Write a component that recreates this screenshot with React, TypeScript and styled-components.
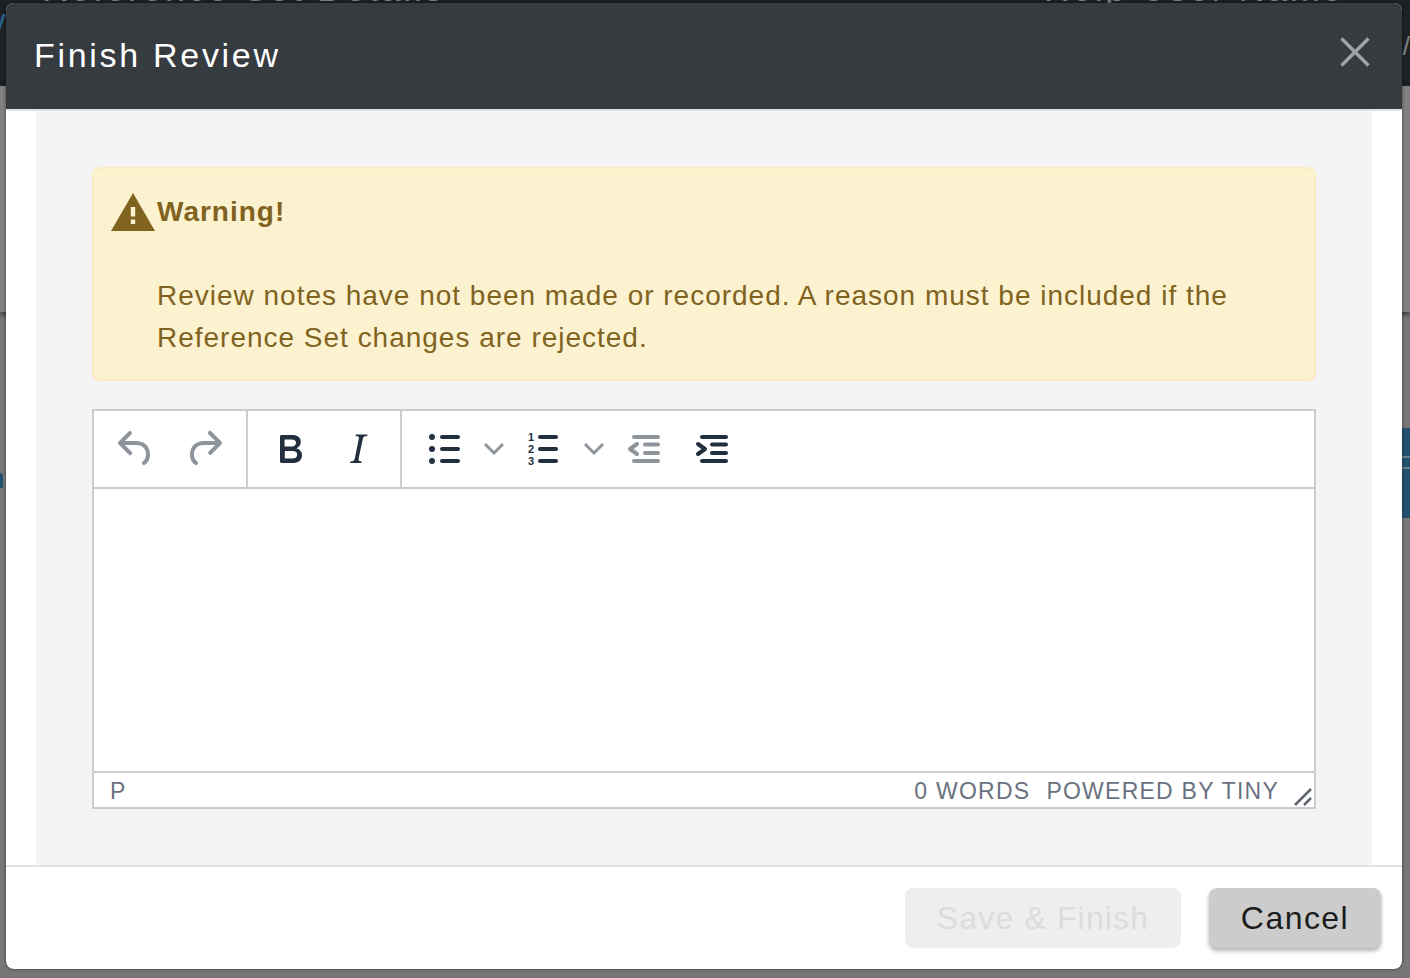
import React from "react";
import styled, { createGlobalStyle } from "styled-components";

const GlobalStyle = createGlobalStyle`
  html, body {
    margin: 0;
    padding: 0;
    height: 100%;
    overflow: hidden;
    background: #777;
    font-family: "Liberation Sans", Arial, sans-serif;
  }
`;

const Page = styled.div`
  position: relative;
  width: 1410px;
  height: 978px;
  overflow: hidden;
`;

/* dimmed page behind the dialog */
const TopBar = styled.div`
  height: 86px;
  background: #1d2125;
  display: flex;
  color: #7d8184;
  font-size: 36px;
  overflow: hidden;
`;

const BrandEnd = styled.span`
  width: 8px;
  color: #265f86;
  margin: 4px 0 0 -12px;
  line-height: 36px;
`;

const GhostText = styled.span<{ $left: string }>`
  margin-top: -29px;
  margin-left: ${(p) => p.$left};
  line-height: 36px;
  letter-spacing: 2.5px;
  white-space: nowrap;
`;

const Slash = styled.span`
  margin: 28px 0 0 58px;
  line-height: 36px;
  font-size: 26px;
`;

const Strip = styled.div`
  height: 226px;
  background: #808080;
  box-shadow: 0 3px 5px rgba(0, 0, 0, 0.5);
  position: relative;
`;

const Lower = styled.div`
  height: 666px;
  background: #777;
  display: flex;
  justify-content: space-between;
`;

const BlueTabLeft = styled.div`
  width: 3px;
  height: 15px;
  margin-top: 161px;
  background: #22506e;
  border-top-right-radius: 3px;
`;

const BlueTabRight = styled.div`
  width: 8px;
  height: 90px;
  margin-top: 116px;
  background: linear-gradient(
    #22506e 0 28px,
    #6d7f8b 28px 30px,
    #22506e 30px 39px,
    #6d7f8b 39px 41px,
    #22506e 41px
  );
`;

/* dialog */
const Modal = styled.div`
  position: absolute;
  left: 6px;
  top: 3px;
  width: 1396px;
  height: 966px;
  background: #fff;
  border-radius: 8px;
  box-shadow: 0 0 3px rgba(0, 0, 0, 0.6);
  display: flex;
  flex-direction: column;
  overflow: hidden;
`;

const Header = styled.header`
  height: 106px;
  flex: none;
  background: #363b3f;
  border-bottom: 2px solid #dee2e6;
  display: flex;
  align-items: flex-start;
  justify-content: space-between;
  padding: 0 32px 0 28px;
`;

const Title = styled.h1`
  margin: 32px 0 0;
  font-size: 34px;
  line-height: 40px;
  font-weight: 400;
  letter-spacing: 2.7px;
  color: #fff;
`;

const CloseButton = styled.button`
  border: 0;
  padding: 0;
  margin-top: 34px;
  width: 30px;
  height: 30px;
  background: none;
  display: flex;
`;

const Body = styled.main`
  flex: 1;
  padding: 0 30px;
  display: flex;
  min-height: 0;
`;

const Panel = styled.section`
  flex: 1;
  background: #f4f4f4;
  padding: 56px 56px 0;
`;

const Alert = styled.div`
  box-sizing: border-box;
  height: 214px;
  background: #fdf2d0;
  border: 2px solid #fcedc0;
  border-radius: 8px;
  color: #80631f;
  padding: 24px 16px 0 17px;
  font-size: 28px;
  letter-spacing: 0.99px;
  line-height: 42px;
`;

const AlertHead = styled.div`
  display: flex;
  align-items: flex-start;
  gap: 2px;
  height: 82px;
`;

const AlertTitle = styled.strong`
  font-weight: 700;
  margin-top: -2px;
`;

const AlertText = styled.p`
  margin: 0 0 0 46px;
  white-space: nowrap;
`;

const Editor = styled.div`
  box-sizing: border-box;
  margin-top: 28px;
  height: 400px;
  background: #fff;
  border: 2px solid #ccc;
  display: flex;
  flex-direction: column;
`;

const Toolbar = styled.div`
  height: 76px;
  flex: none;
  border-bottom: 2px solid #ccc;
  display: flex;
`;

const ToolGroup = styled.div<{ $pad: number; $last?: boolean }>`
  box-sizing: border-box;
  width: 154px;
  flex: ${(p) => (p.$last ? 1 : "none")};
  border-right: ${(p) => (p.$last ? 0 : "2px solid #ccc")};
  padding-left: ${(p) => p.$pad}px;
  display: flex;
  align-items: center;
`;

const ToolButton = styled.button<{ $width: number; $inset?: number }>`
  box-sizing: border-box;
  border: 0;
  padding: 0 0 0 ${(p) => p.$inset ?? 0}px;
  background: none;
  width: ${(p) => p.$width}px;
  height: 68px;
  flex: none;
  display: flex;
  align-items: center;
  justify-content: center;
`;

const ContentArea = styled.div`
  flex: 1;
`;

const StatusBar = styled.footer`
  height: 36px;
  flex: none;
  border-top: 2px solid #ccc;
  display: flex;
  align-items: center;
  padding: 2px 1px 0 16px;
  box-sizing: border-box;
  color: #6a7280;
  font-size: 23px;
  letter-spacing: 1.25px;
  text-transform: uppercase;
`;

const PathLabel = styled.span`
  flex: 1;
`;

const StatusItem = styled.span`
  margin-right: 16px;
  white-space: nowrap;
`;

const Branding = styled.span`
  margin-right: 14px;
  white-space: nowrap;
`;

const Grip = styled.svg`
  align-self: flex-end;
  width: 20px;
  height: 20px;
  flex: none;
`;

const Footer = styled.footer`
  flex: none;
  height: 104px;
  border-top: 2px solid #dee2e6;
  box-sizing: border-box;
  display: flex;
  justify-content: flex-end;
  align-items: flex-start;
  padding: 21px 21px 0 0;
  gap: 28px;
`;

const ActionButton = styled.button<{ $disabled?: boolean }>`
  height: 60px;
  width: ${(p) => (p.$disabled ? 276 : 172)}px;
  border: 0;
  border-radius: 8px;
  font-family: "Liberation Sans", Arial, sans-serif;
  font-size: 32px;
  font-weight: 400;
  letter-spacing: ${(p) => (p.$disabled ? 1.15 : 1.45)}px;
  background: ${(p) => (p.$disabled ? "#eee" : "#ccc")};
  color: ${(p) => (p.$disabled ? "#dcdcdc" : "#1c1c1c")};
  box-shadow: ${(p) =>
    p.$disabled ? "none" : "0 3px 4px rgba(0, 0, 0, 0.3)"};
`;

const DARK = "#222f3e";
const MUTED = "#8e949b";

const Icon = ({ color, children }: { color: string; children: React.ReactNode }) => (
  <svg width="48" height="48" viewBox="0 0 24 24" fill={color}>
    {children}
  </svg>
);

const Chevron = () => (
  <svg width="24" height="16" viewBox="0 0 24 16" fill="none">
    <path d="M3 3l9 9 9-9" stroke={MUTED} strokeWidth="3" />
  </svg>
);

const Line = ({ x, y, w }: { x: number; y: number; w: number }) => (
  <rect x={x} y={y} width={w} height="2" rx="1" />
);

const ListNumber = styled.text`
  font-size: 5.5px;
  font-weight: 700;
  font-family: "Liberation Sans", Arial, sans-serif;
`;

const App = () => {
  return (
    <Page>
      <GlobalStyle />
      <TopBar>
        <BrandEnd>y</BrandEnd>
        <GhostText $left="46px">Reference Set Details</GhostText>
        <GhostText $left="auto">Help User Name</GhostText>
        <Slash>/</Slash>
      </TopBar>
      <Strip />
      <Lower>
        <BlueTabLeft />
        <BlueTabRight />
      </Lower>

      <Modal>
        <Header>
          <Title>Finish Review</Title>
          <CloseButton aria-label="Close">
            <svg width="30" height="30" viewBox="0 0 30 30">
              <path d="M1.500 1.500l27 27M28.500 1.500l-27 27" stroke="#a1a4a6" strokeWidth="3.400" fill="none" />
            </svg>
          </CloseButton>
        </Header>
        <Body>
          <Panel>
            <Alert>
              <AlertHead>
                <svg width="44" height="38" viewBox="0 0 44 38">
                  <path
                    fillRule="evenodd"
                    fill="#80631f"
                    d="M22 0L44 38H0zM19.800 14h4.400v9.500h-4.400zM19.800 26.500h4.400v4.500h-4.400z"
                  />
                </svg>
                <AlertTitle>Warning!</AlertTitle>
              </AlertHead>
              <AlertText>
                Review notes have not been made or recorded. A reason must be included if the
                <br />
                Reference Set changes are rejected.
              </AlertText>
            </Alert>

            <Editor>
              <Toolbar>
                <ToolGroup $pad={6}>
                  <ToolButton $width={72}>
                    <Icon color={MUTED}>
                      <path d="M6.400 8H12c3.700 0 6.200 2 6.800 5.100.6 2.700-.4 5.600-2.300 6.800a1 1 0 0 1-1-1.800c1.100-.6 1.800-2.700 1.400-4.600-.5-2.100-2.100-3.500-4.900-3.500H6.400l3.300 3.300a1 1 0 1 1-1.400 1.400l-5-5a1 1 0 0 1 0-1.400l5-5a1 1 0 0 1 1.400 1.400L6.400 8z" />
                    </Icon>
                  </ToolButton>
                  <ToolButton $width={64}>
                    <Icon color={MUTED}>
                      <path d="M17.600 10H12c-2.800 0-4.400 1.400-4.900 3.500-.4 2 .3 4 1.400 4.600a1 1 0 1 1-1 1.800c-2-1.200-2.900-4.100-2.300-6.800.6-3 3.200-5.100 6.800-5.100h5.600l-3.300-3.300a1 1 0 1 1 1.400-1.400l5 5a1 1 0 0 1 0 1.400l-5 5a1 1 0 0 1-1.400-1.400l3.300-3.300z" />
                    </Icon>
                  </ToolButton>
                </ToolGroup>
                <ToolGroup $pad={8}>
                  <ToolButton $width={68}>
                    <Icon color={DARK}>
                      <path d="M7.800 19c-.3 0-.5 0-.6-.2l-.2-.5V5.700c0-.2 0-.4.2-.5l.6-.2h5c1.500 0 2.700.3 3.500 1 .7.600 1.100 1.400 1.100 2.500a3 3 0 0 1-.6 1.900c-.4.600-1 1-1.600 1.200.4.100.9.300 1.300.6s.8.700 1 1.200c.4.400.5 1 .5 1.600 0 1.300-.4 2.300-1.300 3-.8.700-2.100 1-3.800 1H7.800zm5-8.300c.6 0 1.200-.1 1.600-.5.400-.3.6-.7.6-1.300 0-1.100-.8-1.700-2.300-1.700H9.300v3.500h3.500zm.5 6c.7 0 1.300-.1 1.700-.4.400-.4.600-.9.600-1.500s-.2-1-.7-1.400c-.4-.3-1-.4-2-.4H9.400v3.700h3.900z" />
                    </Icon>
                  </ToolButton>
                  <ToolButton $width={68}>
                    <Icon color={DARK}>
                      <path d="M16.700 4.700l-.1.900h-.3c-.6 0-1 0-1.400.3-.3.300-.4.600-.5 1.100l-2.100 9.800v.6c0 .5.400.8 1.400.8h.2l-.2.800H8l.2-.8h.2c1.100 0 1.800-.5 2-1.500l2-9.800.1-.5c0-.6-.4-.8-1.400-.8h-.3l.2-.9h5.800z" />
                    </Icon>
                  </ToolButton>
                </ToolGroup>
                <ToolGroup $pad={18} $last>
                  <ToolButton $width={48}>
                    <Icon color={DARK}>
                      <circle cx="6" cy="6" r="1.500" />
                      <circle cx="6" cy="12" r="1.500" />
                      <circle cx="6" cy="18" r="1.500" />
                      <Line x={10} y={5} w={10} />
                      <Line x={10} y={11} w={10} />
                      <Line x={10} y={17} w={10} />
                    </Icon>
                  </ToolButton>
                  <ToolButton $width={52}>
                    <Chevron />
                  </ToolButton>
                  <ToolButton $width={48}>
                    <Icon color={DARK}>
                      <ListNumber x="4" y="7.800">1</ListNumber>
                      <ListNumber x="4" y="14">2</ListNumber>
                      <ListNumber x="4" y="20.200">3</ListNumber>
                      <Line x={9} y={5} w={10} />
                      <Line x={9} y={11} w={10} />
                      <Line x={9} y={17} w={10} />
                    </Icon>
                  </ToolButton>
                  <ToolButton $width={42} $inset={10}>
                    <Chevron />
                  </ToolButton>
                  <ToolButton $width={68}>
                    <Icon color={MUTED}>
                      <Line x={6} y={5} w={14} />
                      <Line x={11.500} y={8.700} w={8.500} />
                      <Line x={11.500} y={13} w={8.500} />
                      <Line x={6} y={17} w={14} />
                      <path d="M8.500 9.500L5 12l3.500 2.500" fill="none" stroke={MUTED} strokeWidth="2" strokeLinecap="round" strokeLinejoin="round" />
                    </Icon>
                  </ToolButton>
                  <ToolButton $width={68}>
                    <Icon color={DARK}>
                      <Line x={6} y={5} w={14} />
                      <Line x={11} y={8.700} w={9} />
                      <Line x={11} y={13} w={9} />
                      <Line x={6} y={17} w={14} />
                      <path d="M5 9.500L8.500 12 5 14.500" fill="none" stroke={DARK} strokeWidth="2" strokeLinecap="round" strokeLinejoin="round" />
                    </Icon>
                  </ToolButton>
                </ToolGroup>
              </Toolbar>
              <ContentArea />
              <StatusBar>
                <PathLabel>P</PathLabel>
                <StatusItem>0 words</StatusItem>
                <Branding>Powered by Tiny</Branding>
                <Grip viewBox="0 0 20 20">
                  <path d="M2 18L18 2M11 18l7-7" stroke="#5f6670" strokeWidth="2.500" fill="none" />
                </Grip>
              </StatusBar>
            </Editor>
          </Panel>
        </Body>
        <Footer>
          <ActionButton $disabled disabled>
            Save &amp; Finish
          </ActionButton>
          <ActionButton>Cancel</ActionButton>
        </Footer>
      </Modal>
    </Page>
  );
};

export default App;
